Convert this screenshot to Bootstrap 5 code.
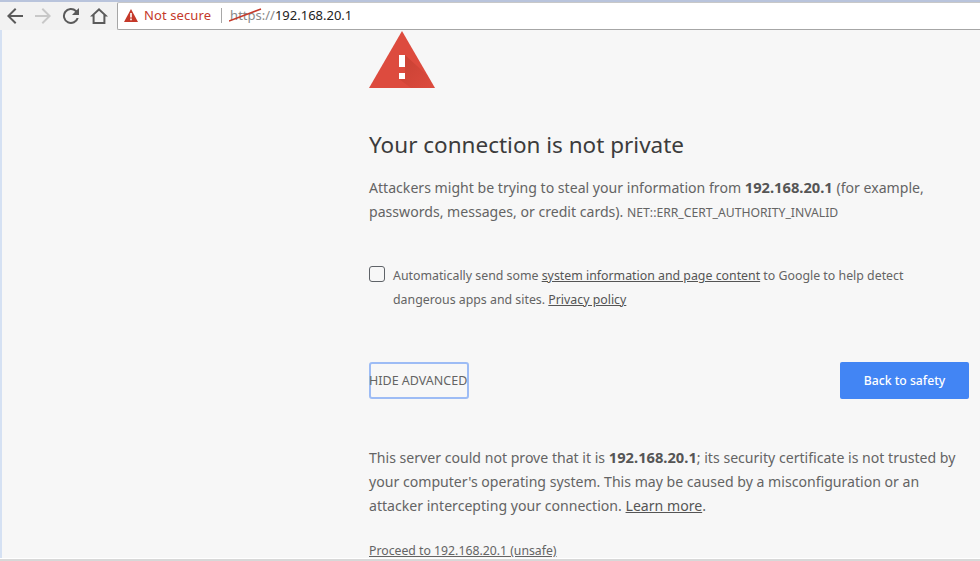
<!DOCTYPE html>
<html lang="en">
<head>
  <meta charset="UTF-8">
  <title>Privacy error</title>
  <link href="https://cdn.jsdelivr.net/npm/bootstrap@5.3.0/dist/css/bootstrap.min.css" rel="stylesheet">
  <style>
    html, body { height: 100%; }
    body {
      font-family: "Noto Sans", "Open Sans", sans-serif;
      background: #f7f7f7;
      color: #646464;
      overflow: hidden;
    }
    .shot { height: 561px; }
    .top-strip { height: 2px; background: #b9c4dc; }
    .chrome-bar { height: 28px; background: #f2f2f2; }
    .nav-ico { width: 24px; height: 24px; }
    .nav-group { width: 117px; padding-left: 3px; gap: 4px; }
    .omnibox {
      height: 28px;
      background: #fff;
      border: 1px solid #a6a6a6;
      border-top-color: #c8c8c8;
      border-right: 0;
      border-radius: 2px 0 0 2px;
      font-size: 13px;
      padding-left: 6px;
      color: #222;
    }
    .not-secure { color: #c5392a; margin-left: 2px; letter-spacing: .1px; }
    .omni-sep { width: 1px; height: 15px; background: #a8a8a8; margin: 0 8px 0 10px; }
    .scheme { position: relative; color: #8a8a8a; }
    .scheme-strike { position: absolute; left: -1px; top: 0; }
    .page-body { border-left: 2px solid #d5e1f3; min-height: 0; }
    .foot-strip { height: 3px; background: #fff; border-bottom: 2px solid #d8d8d8; }
    .page-col { width: 600px; margin-left: 367px; }
    .warn-ico { display: block; margin-top: 1px; }
    .page-title { font-size: 22.5px; font-weight: 400; color: #3c3c3c; margin: 42px 0 0; line-height: 30px; }
    .para { font-size: 14.1px; line-height: 24px; margin: 0; }
    .para b { color: #555; font-weight: 700; font-size: 14.7px; }
    .lead-para { margin-top: 15px; }
    .err-code { font-size: 12.2px; }
    .opt-row { margin-top: 39px; gap: 8px; font-size: 12.35px; line-height: 24px; padding-right: 30px; }
    .opt-box { width: 16px; height: 16px; border: 1px solid #5f6368; border-radius: 3px; flex: none; margin-top: 2px; }
    .para a, .opt-row a, .proceed-link { color: #555; text-decoration: underline; }
    .btn-row { margin-top: 50px; }
    .adv-btn {
      width: 100px; height: 37px; padding: 1px 0 0;
      font-size: 12.5px; color: #646464; background: #f7f7f7;
      border: 2px solid #9dbcf5; border-radius: 3px; white-space: nowrap;
      text-align: left; text-indent: -2px;
    }
    .safe-btn {
      width: 129px; height: 37px; padding: 1px 0 0;
      font-size: 12.2px; font-weight: 500; color: #fff; background: #4285f4;
      border: 0; border-radius: 2px;
    }
    .detail-para { margin-top: 46px; }
    .proceed-link { display: block; margin-top: 23px; font-size: 12.25px; line-height: 20px; color: #646464; }
  </style>
</head>
<body>
  <div class="shot d-flex flex-column">
    <div class="top-strip"></div>
    <div class="chrome-bar d-flex align-items-center">
      <div class="nav-group d-flex align-items-center">
        <svg class="nav-ico" viewBox="0 0 24 24"><path d="M20 11H7.8l5.6-5.6L12 4l-8 8 8 8 1.4-1.4L7.8 13H20z" fill="#5a5a5a"/></svg>
        <svg class="nav-ico" viewBox="0 0 24 24"><path d="M4 11h12.2l-5.6-5.6L12 4l8 8-8 8-1.4-1.4 5.6-5.6H4z" fill="#c8c8c8"/></svg>
        <svg class="nav-ico" viewBox="0 0 24 24"><path d="M17.65 6.35A8 8 0 1 0 19.7 14h-2.1a6 6 0 1 1-1.4-6.2L13 11h7V4z" fill="#5a5a5a"/></svg>
        <svg class="nav-ico" viewBox="0 0 24 24"><path d="M12 4 3 12.5h2.6V20h12.8v-7.5H21zM16.4 18H7.6v-7.3L12 6.8l4.4 3.9z" fill="#5a5a5a"/></svg>
      </div>
      <div class="omnibox flex-grow-1 d-flex align-items-center">
        <svg width="14" height="13" viewBox="0 0 14 13" class="me-1"><path d="M7 0 14 13H0z" fill="#c5392a"/><path d="M6.2 4h1.6v4.6H6.2zM6.2 9.6h1.6v1.6H6.2z" fill="#fff"/></svg>
        <span class="not-secure">Not secure</span>
        <span class="omni-sep"></span>
        <span class="scheme">https<svg class="scheme-strike" width="34" height="18" viewBox="0 0 34 18"><path d="M0 15 32 3" stroke="#c5392a" stroke-width="1.6" fill="none"/></svg></span><span class="scheme">://</span><span>192.168.20.1</span>
      </div>
    </div>
    <div class="page-body flex-grow-1 overflow-hidden">
      <main class="page-col">
        <svg class="warn-ico" width="66" height="57" viewBox="0 0 66 57">
          <defs>
            <linearGradient id="warnShade" x1="0" y1="0" x2="1" y2="1">
              <stop offset="0" stop-color="#b93a2c" stop-opacity=".6"/>
              <stop offset="1" stop-color="#b93a2c" stop-opacity="0"/>
            </linearGradient>
          </defs>
          <path d="M33 0 66 57H0z" fill="#dd4b3e"/>
          <path d="M36 24 58 44 63 52 66 57H42L30 48H36V36z" fill="url(#warnShade)"/>
          <rect x="30" y="24" width="6" height="12" fill="#fff"/>
          <rect x="30" y="42" width="6" height="6" fill="#fff"/>
        </svg>
        <h1 class="page-title">Your connection is not private</h1>
        <p class="para lead-para">Attackers might be trying to steal your information from <b>192.168.20.1</b> (for example, passwords, messages, or credit cards). <span class="err-code">NET::ERR_CERT_AUTHORITY_INVALID</span></p>
        <div class="opt-row d-flex">
          <span class="opt-box"></span>
          <div>Automatically send some <a href="#">system information and page content</a> to Google to help detect dangerous apps and sites. <a href="#">Privacy policy</a></div>
        </div>
        <div class="btn-row d-flex justify-content-between">
          <button class="adv-btn" type="button">HIDE ADVANCED</button>
          <button class="safe-btn" type="button">Back to safety</button>
        </div>
        <p class="para detail-para">This server could not prove that it is <b>192.168.20.1</b>; its security certificate is not trusted by your computer's operating system. This may be caused by a misconfiguration or an attacker intercepting your connection. <a href="#">Learn more</a>.</p>
        <a class="proceed-link" href="#">Proceed to 192.168.20.1 (unsafe)</a>
      </main>
    </div>
    <div class="foot-strip"></div>
  </div>
  <script src="https://cdn.jsdelivr.net/npm/bootstrap@5.3.0/dist/js/bootstrap.bundle.min.js"></script>
</body>
</html>
